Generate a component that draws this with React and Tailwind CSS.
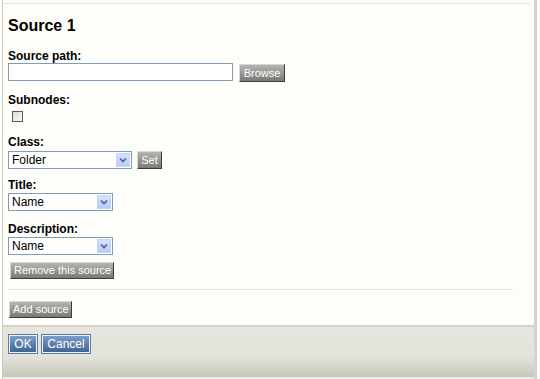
import React from "react"

const font = { fontFamily: '"Liberation Sans", Arial, sans-serif' }

const GrayButton = ({ children, className = "" }) => (
  <button
    className={`h-[17px] px-[3px] whitespace-nowrap text-center text-[11px] leading-[15px] text-white bg-gradient-to-b from-[#b4b4b0] to-[#7a7a78] border border-t-[#d8d8d4] border-l-[#d8d8d4] border-r-[#3c3c3c] border-b-[#3c3c3c] ${className}`}
  >
    {children}
  </button>
)

const BlueButton = ({ children, className = "" }) => (
  <button
    className={`h-[18px] whitespace-nowrap text-center text-[12px] leading-[16px] text-white bg-gradient-to-b from-[#7d9dc6] to-[#3e6594] border border-[#eef4fb] outline outline-1 outline-[#5b7ba3] ${className}`}
  >
    {children}
  </button>
)

const Select = ({ value, width }) => (
  <div className={`relative h-[18px] ${width} border border-[#7f9db9] bg-white`}>
    <span className="block pl-[3px] text-[12px] leading-[16px] text-black">{value}</span>
    <span className="absolute right-[1px] top-[1px] flex h-[14px] w-[14px] items-center justify-center bg-gradient-to-b from-[#d6e2fc] to-[#b7cbf6] border border-[#c3d3fd]">
      <svg width="8" height="6" viewBox="0 0 8 6">
        <path d="M1 1.5 L4 4.5 L7 1.5" fill="none" stroke="#4d6185" strokeWidth="1.6" />
      </svg>
    </span>
  </div>
)

const Label = ({ children, className = "" }) => (
  <p className={`text-[12px] leading-[14px] font-bold text-black ${className}`}>{children}</p>
)

export default function App() {
  return (
    <div className="w-[540px] h-[379px] bg-[#fdfdfa] pl-[2px] overflow-hidden" style={font}>
      <div className="w-[535px] h-[379px] flex flex-col border-l border-[#cbcbc4] border-r-[3px] border-r-[#d4d4cc]">
        <div className="pt-[3px] pr-[4px] pl-[1px]">
          <div className="h-[1px] bg-[#e2e2da]" />
        </div>

        <div className="pl-[5px] flex-1 flex flex-col">
          <h1 className="mt-[13px] text-[16px] leading-[18px] font-bold text-black">Source 1</h1>

          <Label className="mt-[14px]">Source path:</Label>
          <div className="flex items-start">
            <div className="h-[18px] w-[225px] border border-[#7f9db9] bg-white" />
            <GrayButton className="ml-[6px] mt-[1px] h-[18px] w-[46px]">Browse</GrayButton>
          </div>

          <Label className="mt-[11px]">Subnodes:</Label>
          <div className="flex">
            <span className="ml-[4px] mt-[4px] block h-[11px] w-[11px] border border-[#5a5a5a] bg-gradient-to-br from-[#dcdcd6] to-[#fbfbf8]" />
          </div>

          <Label className="mt-[13px]">Class:</Label>
          <div className="mt-[2px] flex items-start">
            <Select value="Folder" width="w-[124px]" />
            <GrayButton className="ml-[5px] w-[25px] h-[18px]">Set</GrayButton>
          </div>

          <Label className="mt-[9px]">Title:</Label>
          <div className="mt-[1px] flex">
            <Select value="Name" width="w-[105px]" />
          </div>

          <Label className="mt-[11px]">Description:</Label>
          <div className="mt-[1px] flex">
            <Select value="Name" width="w-[105px]" />
          </div>

          <div className="mt-[7px] ml-[2px] flex">
            <GrayButton className="w-[104px]">Remove this source</GrayButton>
          </div>

          <div className="mt-[10px] mr-[21px] h-[1px] bg-[#e3e3dc]" />

          <div className="mt-[11px] ml-[1px] flex">
            <GrayButton className="w-[63px]">Add source</GrayButton>
          </div>
        </div>

        <div className="h-[2px] bg-[#d3d3ca]" />
        <div className="h-[50px] flex flex-col bg-gradient-to-b from-[#e6e6df] via-[#e3e3db] via-60% to-[#c6c6ba]">
          <div className="pl-[6px] pt-[8px] flex gap-[5px]">
            <BlueButton className="w-[28px]">OK</BlueButton>
            <BlueButton className="w-[48px]">Cancel</BlueButton>
          </div>
        </div>
        <div className="h-[2px] bg-[#ecece6]" />
      </div>
    </div>
  )
}
